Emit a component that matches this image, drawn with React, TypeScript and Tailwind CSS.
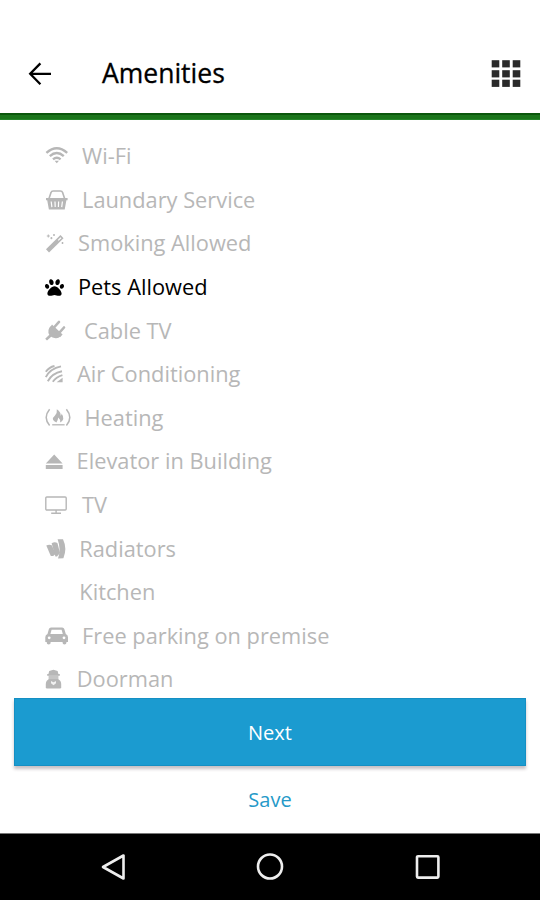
import React, { useState } from "react";
import { FaPaw } from "react-icons/fa";

const icons: Record<string, React.ReactNode> = {
  wifi: (
    <g fill="none" stroke="currentColor" strokeWidth="2.4">
      <path d="M2.4 8.9Q12.8-.3 23.2 8.9" />
      <path d="M5.8 12.2q7-6.2 14 0" />
      <path d="M9 15.4q3.8-3.2 7.6 0" />
      <path d="M10.6 16.8h4.4l-2.2 2.5z" fill="currentColor" stroke="none" />
    </g>
  ),
  basket: (
    <g>
      <path
        d="M5 10.5 7 4.6Q7.4 3 9.2 3h7.2q1.8 0 2.2 1.6l2 5.9"
        fill="none"
        stroke="currentColor"
        strokeWidth="1.6"
      />
      <path d="M2 10h21.6v2.3h-1.2l-1.7 9.2H4.9L3.2 12.3H2z" fill="currentColor" />
      <path
        d="m7.2 13.5.7 5.6M11 13.5l.2 5.6M14.6 13.5l-.2 5.6M18.4 13.5l-.7 5.6"
        stroke="#fff"
        strokeWidth="1.2"
      />
    </g>
  ),
  wand: (
    <g fill="none" stroke="currentColor">
      <path d="M3.5 18.8 18 4.7" strokeWidth="4.4" />
      <path d="m14.2 8.4 2.8-2.7" stroke="#fff" strokeWidth="1.2" />
      <path
        d="M4.3 2.5v3M2.8 4h3M10 2v2M9 3h2M7.4 5v2.2M6.3 6.1h2.2M18.5 10v2M17.5 11h2"
        strokeWidth="1"
      />
    </g>
  ),
  plug: (
    <g fill="currentColor">
      <path d="M6.4 7.2 16.6 17.2Q14 19.8 10.6 18.9 8.4 18.6 7.2 17.7L3 21.4 1.2 19.7 5.3 15.8Q2.8 11.4 6.4 7.2z" />
      <path
        d="m10 8.5 5-5.6M15.2 13.8l4.8-5.3"
        fill="none"
        stroke="currentColor"
        strokeWidth="2.6"
        strokeLinecap="round"
      />
      <path d="m8 5.4 10.6 10.1-2.6 2.7-9.8-9.9z" />
    </g>
  ),
  air: (
    <g fill="none" stroke="currentColor" strokeWidth="1.9">
      <path d="M1.8 9.8Q5 5.2 10.5 4" />
      <path d="M1.8 15.2Q6 6.7 17 4.4" />
      <path d="M3.8 19.2Q8 11.3 18 9.2" />
      <path d="M8.8 19.8Q12 15 18.4 13.2" />
      <path d="m12.6 20.2 6-4.4v4.4z" fill="currentColor" stroke="none" />
    </g>
  ),
  heating: (
    <g fill="none" stroke="currentColor" strokeWidth="1.5">
      <path d="M5.6 3.2Q-1.2 11.5 5.6 19.4" />
      <path d="M22.4 3.2q6.8 8.3 0 16.2" />
      <path d="M8.2 18.8h12.4" strokeWidth="1.3" />
      <path
        d="M12.8 3.2q4.6 3 3.7 6.6 1.3-.6 1.1-2.2 4 5.8-1.4 9 .6-2.9-2-5-.3 3.2-1.8 5Q6.2 13.6 11 9.4q2.4-2.7 1.8-6.2z"
        fill="currentColor"
        stroke="none"
      />
    </g>
  ),
  eject: (
    <path d="M10.2 4.4 18.6 13.4H1.8zM1.8 15h16.8v4H1.8z" fill="currentColor" />
  ),
  tv: (
    <g fill="none" stroke="currentColor" strokeWidth="1.4">
      <rect x="1.8" y="4" width="20.4" height="13" rx="1" />
      <path d="M7.2 20.2h9.8M12.1 17v3" />
    </g>
  ),
  radiator: (
    <g fill="currentColor">
      <path d="M2.3 8.5Q5 7.2 7.7 8.2L11.8 16.8 9.2 19H6.8z" />
      <path d="M7.6 6.3Q10.6 4.6 13.4 6L16 16l-3 3.4h-1.6z" />
      <path d="M13.6 2.2h5.4q4.4 9.2.4 19l-5.4.3q3.4-9-.4-19.3z" />
    </g>
  ),
  car: (
    <g>
      <path
        d="M7 3.5h11.2q1.6 0 2.1 1.5l1.5 5q2.2.8 2.2 3.2v4.7h-1.6v1.2q0 1.3-1.9 1.3t-1.9-1.3v-1.2H6.6v1.2q0 1.3-1.9 1.3t-1.9-1.3v-1.2H1.3v-4.7Q1.3 10.8 3.5 10L4.9 5q.5-1.5 2.1-1.5z"
        fill="currentColor"
      />
      <path d="M7.6 5.8h10l1.2 4.1H6.4z" fill="#fff" />
      <circle cx="5.2" cy="13.8" r="1.4" fill="#fff" />
      <circle cx="20" cy="13.8" r="1.4" fill="#fff" />
    </g>
  ),
  doorman: (
    <g fill="currentColor">
      <path d="M5.2 3 9.4 1.8 13.6 3l1 4H4.2z" />
      <path d="M3.2 6h12.6v1.8H3.2z" />
      <path d="M4.6 7.8h9.8v3.8H4.6z" opacity=".8" />
      <path d="M5 10.9h9q3.2 1.6 3.2 5.1v3.3q0 1.2-1.2 1.2H3q-1.2 0-1.2-1.2V16q0-3.5 3.2-5.1z" />
      <path d="m7 13 2.5 1.2L12 13v2.2l-2.5 2L7 15.2z" fill="#fff" opacity=".8" />
    </g>
  ),
};

const amenities = [
  { name: "Wi-Fi", icon: "wifi", style: "pl-[38px]" },
  { name: "Laundary Service", icon: "basket", style: "pl-[38px]" },
  { name: "Smoking Allowed", icon: "wand", style: "pl-[34px]" },
  { name: "Pets Allowed", icon: "paw", style: "pl-[34px]" },
  { name: "Cable TV", icon: "plug", style: "pl-[40px]" },
  { name: "Air Conditioning", icon: "air", style: "pl-[33px]" },
  { name: "Heating", icon: "heating", style: "pl-[40.5px]" },
  { name: "Elevator in Building", icon: "eject", style: "pl-[32.6px]" },
  { name: "TV", icon: "tv", style: "pl-[38px]" },
  { name: "Radiators", icon: "radiator", style: "pl-[35.3px]" },
  { name: "Kitchen", icon: "", style: "pl-[35.3px]" },
  { name: "Free parking on premise", icon: "car", style: "pl-[38px]" },
  { name: "Doorman", icon: "doorman", style: "pl-[32.8px]" },
];

function AmenityIcon({ icon }: { icon: string }) {
  if (icon === "paw") return <FaPaw className="ml-px w-[19px] h-[19px]" />;
  return (
    <svg className="w-7 h-6" viewBox="0 0 28 24">
      {icons[icon]}
    </svg>
  );
}

export default function App() {
  const [selected, setSelected] = useState("Pets Allowed");

  return (
    <div className="w-[540px] h-[900px] bg-white flex flex-col overflow-hidden font-['Open_Sans','Noto_Sans',sans-serif]">
      {/* Header */}
      <header className="h-[113px] shrink-0 pt-[34px] pl-[28px] pr-[19px] flex items-center">
        <svg className="w-6 h-6" viewBox="0 0 24 24" fill="none" stroke="#000" strokeWidth="2.3">
          <path d="M12.4 1.4 2.2 11.8l10.2 10.4M2.2 11.8H23" />
        </svg>
        <h1 className="ml-[50px] text-[26.5px] leading-none text-black [-webkit-text-stroke:0.3px_#000]">
          Amenities
        </h1>
        <svg className="ml-auto w-[30px] h-7" viewBox="0 0 30 28" fill="#2a2a2a">
          {[0, 10.5, 21].map((x) =>
            [0, 10, 19.5].map((y) => (
              <rect key={`${x}-${y}`} x={x + 0.7} y={y + 0.2} width="7.6" height="7.2" />
            ))
          )}
        </svg>
      </header>
      <div className="h-[7px] shrink-0 bg-[#1b751b] border-t-2 border-b border-t-[#0c570c] border-b-[#26862a]" />

      {/* Amenities */}
      <ul className="h-[578px] shrink-0 pt-[14.7px] pl-[44px] overflow-hidden">
        {amenities.map(({ name, icon, style }) => (
          <li
            key={name}
            onClick={() => setSelected(name)}
            className={`relative h-[43.6px] pb-[0.6px] flex items-center text-[21.8px] leading-none whitespace-nowrap cursor-pointer ${
              name === selected ? "text-black" : "text-[#b7b7b7]"
            } ${style}`}
          >
            <span className="absolute left-0 inset-y-0 flex items-center">
              <AmenityIcon icon={icon} />
            </span>
            {name}
          </li>
        ))}
      </ul>

      {/* Actions */}
      <button className="mx-[14px] h-[68px] shrink-0 bg-[#1b9bd0] border border-[#158fc3] pt-px text-white text-[20px] shadow-[0_3px_3px_rgba(70,50,60,0.3)]">
        Next
      </button>
      <button className="flex-1 text-[#2599c8] text-[20px]">Save</button>

      {/* Navigation bar */}
      <nav className="h-[67px] shrink-0 bg-black border-t border-[#777] flex items-center justify-between pl-[99px] pr-[99px]">
        <svg className="w-7 h-7" viewBox="0 0 28 28" fill="none" stroke="#eee" strokeWidth="2.6">
          <path d="M4 14 24.5 2.5v23z" strokeLinejoin="round" />
        </svg>
        <svg className="w-7 h-7" viewBox="0 0 28 28" fill="none" stroke="#eee" strokeWidth="2.6">
          <circle cx="14" cy="13.5" r="12" />
        </svg>
        <svg className="w-7 h-7" viewBox="0 0 28 28" fill="none" stroke="#eee" strokeWidth="2.6">
          <rect x="4" y="3.2" width="21.4" height="21.4" rx="1" />
        </svg>
      </nav>
    </div>
  );
}
